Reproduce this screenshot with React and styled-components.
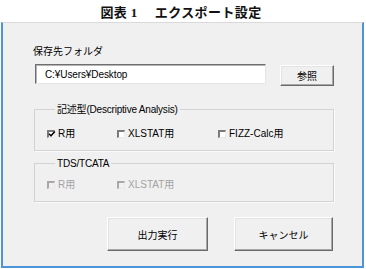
import React from 'react';
import styled, { createGlobalStyle } from 'styled-components';

const GlobalStyle = createGlobalStyle`
  body {
    margin: 0;
    background: #ffffff;
    font-family: "Liberation Sans", "Noto Sans CJK JP", sans-serif;
  }
`;

const Page = styled.div`
  width: 366px;
  height: 269px;
  display: flex;
  flex-direction: column;
`;

const Title = styled.div`
  height: 22px;
  display: flex;
  align-items: center;
  justify-content: center;
  padding-right: 4px;
  font-family: "Liberation Serif", "Noto Sans CJK JP", serif;
  font-weight: bold;
  font-size: 13px;
  letter-spacing: 0.4px;
  color: #111;
  white-space: pre;
`;

const Window = styled.div`
  box-sizing: border-box;
  margin-left: 1px;
  width: 363px;
  height: 246px;
  background: #f0f0f0;
  border-top: 1px solid #d9d9d9;
  border-left: 2px solid #4b94d8;
  border-right: 2px solid #4b94d8;
  border-bottom: 2px solid #4b94d8;
  padding: 22px 0 0 30px;
  font-size: 10px;
  line-height: 13px;
  color: #000;
`;

const Label = styled.div`
  height: 13px;
`;

const PathRow = styled.div`
  display: flex;
  align-items: flex-start;
  margin-top: 6px;
  height: 21px;
`;

const TextBox = styled.div`
  box-sizing: border-box;
  width: 231px;
  height: 20px;
  margin-left: 2px;
  background: #fff;
  border-top: 1px solid #6f6f6f;
  border-left: 1px solid #6f6f6f;
  border-right: 1px solid #e6e6e6;
  border-bottom: 1px solid #e6e6e6;
  box-shadow: inset 1px 1px 0 #b4b4b4;
  padding: 3px 0 0 9px;
  letter-spacing: -0.1px;
`;

const Button = styled.button`
  box-sizing: border-box;
  width: ${(p) => p.w}px;
  height: ${(p) => p.h}px;
  margin-top: ${(p) => p.mt || 0}px;
  margin-left: ${(p) => p.ml || 0}px;
  padding: 0;
  background: #f0f0f0;
  border-top: 1px solid #ffffff;
  border-left: 1px solid #ffffff;
  border-right: 1px solid #6a6a6a;
  border-bottom: 1px solid #6a6a6a;
  box-shadow: inset -1px -1px 0 #a8a8a8, inset 1px 1px 0 #e3e3e3;
  font-family: inherit;
  font-size: 10px;
  color: #000;
  display: flex;
  align-items: center;
  justify-content: center;
`;

const Group = styled.fieldset`
  box-sizing: border-box;
  width: 300px;
  margin: ${(p) => p.mt}px 0 0 1px;
  padding: ${(p) => p.pt}px 0 ${(p) => p.pb}px 12px;
  border: 1px solid #d3d3d3;
  box-shadow: 1px 1px 0 #fbfbfb;
`;

const Legend = styled.legend`
  margin-left: 8px;
  padding: 0 2px;
  height: 13px;
  line-height: 13px;
  color: #000;
  letter-spacing: -0.2px;
`;

const CheckRow = styled.div`
  display: grid;
  grid-template-columns: 70px 101px auto;
  align-items: center;
  height: 13px;
`;

const CheckItem = styled.div`
  display: flex;
  align-items: center;
  color: ${(p) => (p.disabled ? '#a3a3a3' : '#000')};
`;

const Box = styled.span`
  box-sizing: border-box;
  width: 8px;
  height: 8px;
  margin-right: 3px;
  background: ${(p) => (p.disabled ? '#f0f0f0' : '#fff')};
  border-top: 2px solid ${(p) => (p.disabled ? '#a8a8a8' : '#7a7a7a')};
  border-left: 2px solid ${(p) => (p.disabled ? '#a8a8a8' : '#7a7a7a')};
  border-right: 1px solid #e8e8e8;
  border-bottom: 1px solid #e8e8e8;
  display: flex;
  align-items: center;
  justify-content: center;
  overflow: visible;
`;

const ButtonRow = styled.div`
  display: flex;
  margin-top: 15px;
  padding-left: 74px;
`;

function CheckBox({ label, checked, disabled }) {
  return (
    <CheckItem disabled={disabled}>
      <Box disabled={disabled}>
        {checked && (
          <svg width="6" height="6" viewBox="0 0 6 6" style={{ overflow: 'visible' }}>
            <path d="M0 2.8 L2 4.8 L5.8 0.6" stroke="#000" strokeWidth="1.5" fill="none" />
          </svg>
        )}
      </Box>
      {label}
    </CheckItem>
  );
}

function App() {
  return (
    <Page>
      <GlobalStyle />
      <Title>{'図表 1　 エクスポート設定'}</Title>
      <Window>
        <Label>保存先フォルダ</Label>
        <PathRow>
          <TextBox>C:¥Users¥Desktop</TextBox>
          <Button w={54} h={21} mt={1} ml={14}>参照</Button>
        </PathRow>
        <Group mt={18} pt={11} pb={10}>
          <Legend>記述型(Descriptive Analysis)</Legend>
          <CheckRow>
            <CheckBox label="R用" checked />
            <CheckBox label="XLSTAT用" />
            <CheckBox label="FIZZ-Calc用" />
          </CheckRow>
        </Group>
        <Group mt={6} pt={8} pb={10}>
          <Legend>TDS/TCATA</Legend>
          <CheckRow>
            <CheckBox label="R用" disabled />
            <CheckBox label="XLSTAT用" disabled />
          </CheckRow>
        </Group>
        <ButtonRow>
          <Button w={101} h={34}>出力実行</Button>
          <Button w={99} h={34} ml={26}>キャンセル</Button>
        </ButtonRow>
      </Window>
    </Page>
  );
}

export default App;
